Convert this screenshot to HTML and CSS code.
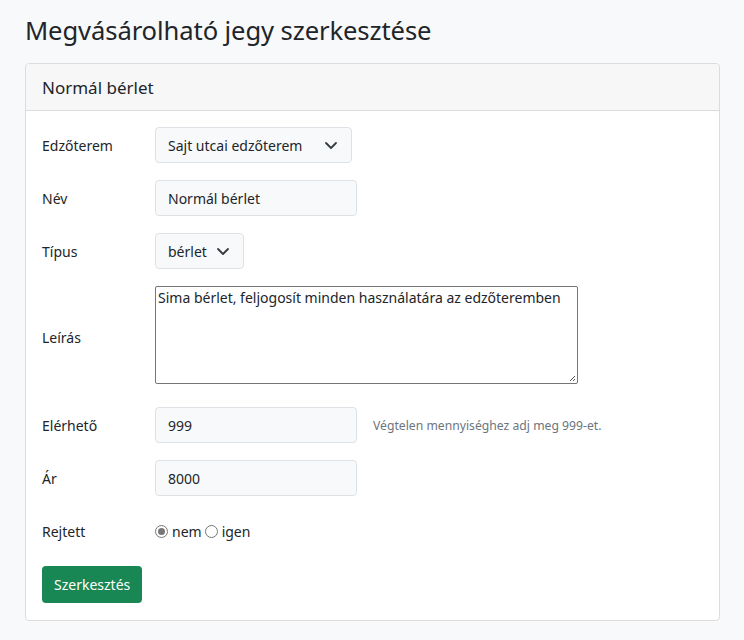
FILE: index.html
```html
<!DOCTYPE html>
<html lang="hu">
<head>
<meta charset="utf-8">
<link rel="stylesheet" href="styles.css">
</head>
<body>
<main class="page">
  <h1 class="title">Megvásárolható jegy szerkesztése</h1>
  <section class="card">
    <div class="card-header">Normál bérlet</div>
    <form class="card-body">
      <div class="row">
        <label class="lbl">Edzőterem</label>
        <div class="select w-gym"><span>Sajt utcai edzőterem</span><svg class="chev" viewBox="0 0 16 16"><path d="M3 6l5 5 5-5" fill="none" stroke="#343a40" stroke-width="1.8" stroke-linecap="round" stroke-linejoin="round"/></svg></div>
      </div>
      <div class="row">
        <label class="lbl">Név</label>
        <div class="input w-std">Normál bérlet</div>
      </div>
      <div class="row">
        <label class="lbl">Típus</label>
        <div class="select w-type"><span>bérlet</span><svg class="chev" viewBox="0 0 16 16"><path d="M3 6l5 5 5-5" fill="none" stroke="#343a40" stroke-width="1.8" stroke-linecap="round" stroke-linejoin="round"/></svg></div>
      </div>
      <div class="row row-area">
        <label class="lbl lbl-area">Leírás</label>
        <div class="textarea">Sima bérlet, feljogosít minden használatára az edzőteremben<svg class="grip" viewBox="0 0 8 8"><path d="M7 2L2 7M7 5L5 7" stroke="#555" stroke-width="1"/></svg></div>
      </div>
      <div class="row">
        <label class="lbl">Elérhető</label>
        <div class="input w-std">999</div>
        <span class="help">Végtelen mennyiséghez adj meg 999-et.</span>
      </div>
      <div class="row">
        <label class="lbl">Ár</label>
        <div class="input w-std">8000</div>
      </div>
      <div class="row">
        <label class="lbl">Rejtett</label>
        <span class="radio checked"></span><span class="rtext">nem</span>
        <span class="radio"></span><span class="rtext">igen</span>
      </div>
      <div class="actions">
        <span class="btn">Szerkesztés</span>
      </div>
    </form>
  </section>
</main>
</body>
</html>
```
FILE: styles.css
```css
* { box-sizing: border-box; }
html, body { margin: 0; padding: 0; }
body {
  background: #f8f9fa;
  font-family: "Noto Sans", "Open Sans", sans-serif;
  color: #212529;
  font-size: 14px;
}
.page { padding: 14px 24px 0 25px; width: 720px; }
.title {
  font-size: 25.6px;
  font-weight: 400;
  margin: 0 0 15px 0;
  line-height: 34px;
  letter-spacing: -0.1px;
}
.card {
  background: #fff;
  border: 1px solid #dcdcdc;
  border-radius: 4px;
  width: 695px;
}
.card-header {
  background: #f7f7f7;
  border-bottom: 1px solid #dcdcdc;
  height: 47px;
  padding: 0 16px;
  font-size: 17px;
  display: flex;
  align-items: center;
  border-radius: 4px 4px 0 0;
}
.card-body { padding: 16px 16px 17px 16px; display: flex; flex-direction: column; }
.row { display: flex; align-items: center; margin-bottom: 17px; min-height: 36px; }
.lbl { width: 113px; flex: none; }
.lbl-area { padding-top: 4px; }
.select, .input {
  height: 36px;
  background: #f8f9fa;
  border: 1px solid #dee2e6;
  border-radius: 4px;
  padding: 0 12px;
  display: flex;
  align-items: center;
}
.select { justify-content: space-between; }
.chev { width: 16px; height: 16px; flex: none; }
.w-gym { width: 197px; }
.w-type { width: 89px; }
.w-std { width: 202px; }
.textarea {
  position: relative;
  width: 423px;
  height: 98px;
  border: 1px solid #767676;
  border-radius: 2px;
  padding: 1px 2px;
  line-height: 20px;
  background: #fff;
}
.grip { position: absolute; right: 1px; bottom: 1px; width: 8px; height: 8px; }
.row-area { margin-top: 0; margin-bottom: 23px; }
.help { color: #6c757d; font-size: 12.2px; margin-left: 16px; }
.radio {
  width: 13px; height: 13px;
  border: 1px solid #767676;
  border-radius: 50%;
  display: inline-block;
  position: relative;
  margin-right: 4px;
}
.radio.checked::after {
  content: ""; position: absolute; left: 2px; top: 2px;
  width: 7px; height: 7px; border-radius: 50%; background: #767676;
}
.rtext { margin-right: 3px; }
.actions { display: flex; }
.btn {
  background: #198754;
  color: #fff;
  border-radius: 4px;
  height: 37px;
  padding: 0 12px;
  display: flex;
  align-items: center;
  font-size: 14px;
}
```
